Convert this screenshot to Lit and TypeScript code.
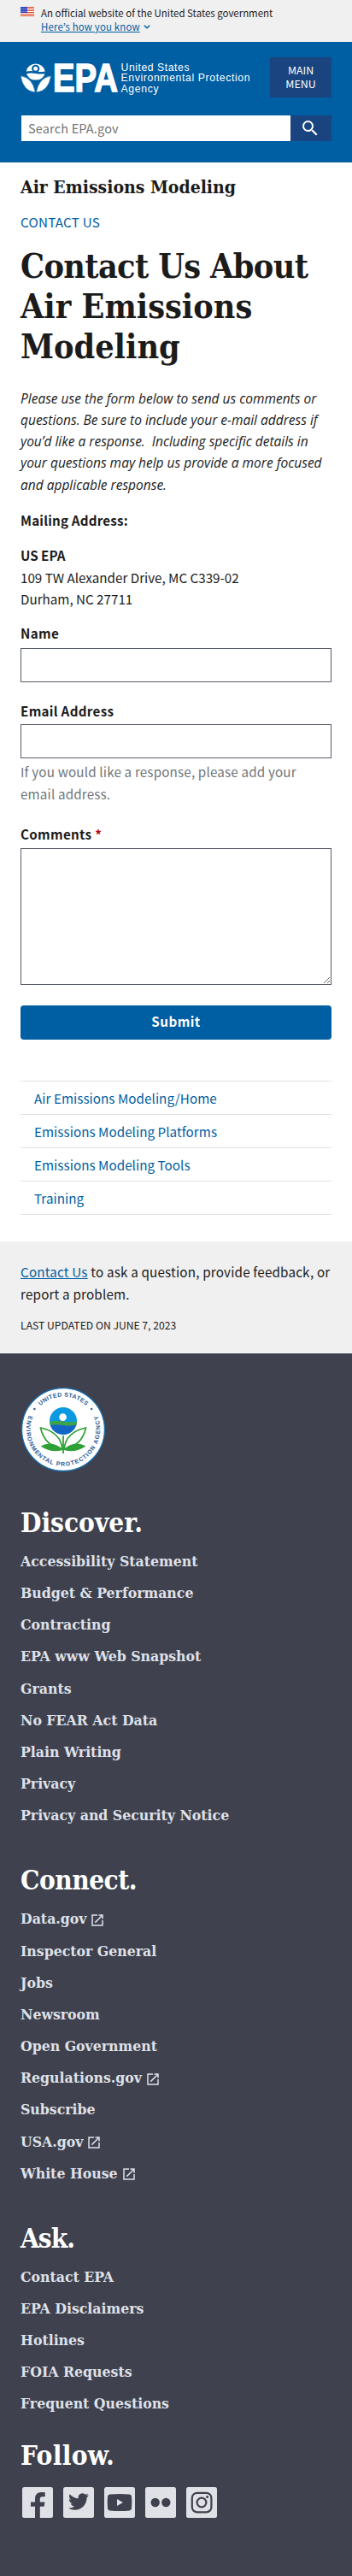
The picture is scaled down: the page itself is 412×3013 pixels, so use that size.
import { LitElement, html, css, svg } from "lit";
import { customElement } from "lit/decorators.js";

interface FooterLink {
  label: string;
  external?: boolean;
}

interface FooterGroup {
  title: string;
  name: string;
  links: FooterLink[];
}

const SECTIONS = [
  "Air Emissions Modeling/Home",
  "Emissions Modeling Platforms",
  "Emissions Modeling Tools",
  "Training",
];

const GROUPS: FooterGroup[] = [
  {
    title: "Discover.",
    name: "discover",
    links: [
      { label: "Accessibility Statement" },
      { label: "Budget & Performance" },
      { label: "Contracting" },
      { label: "EPA www Web Snapshot" },
      { label: "Grants" },
      { label: "No FEAR Act Data" },
      { label: "Plain Writing" },
      { label: "Privacy" },
      { label: "Privacy and Security Notice" },
    ],
  },
  {
    title: "Connect.",
    name: "connect",
    links: [
      { label: "Data.gov", external: true },
      { label: "Inspector General" },
      { label: "Jobs" },
      { label: "Newsroom" },
      { label: "Open Government" },
      { label: "Regulations.gov", external: true },
      { label: "Subscribe" },
      { label: "USA.gov", external: true },
      { label: "White House", external: true },
    ],
  },
  {
    title: "Ask.",
    name: "ask",
    links: [
      { label: "Contact EPA" },
      { label: "EPA Disclaimers" },
      { label: "Hotlines" },
      { label: "FOIA Requests" },
      { label: "Frequent Questions" },
    ],
  },
];

@customElement("epa-header")
class EpaHeader extends LitElement {
  static styles = css`
    :host { display: block; }
    .banner {
      display: flex;
      box-sizing: border-box;
      height: 49px;
      padding: 7px 24px 0;
      gap: 8px;
      background: #f0f0f0;
      color: #1b1b1b;
      font-size: 11.45px;
      line-height: 16px;
    }
    .flag { display: block; margin-top: 1px; }
    .know { display: flex; align-items: center; gap: 3px; color: #005ea2; }
    .know a { text-decoration: underline; letter-spacing: 0.15px; }
    .banner p { margin: 0; white-space: nowrap; }
    .head { height: 141px; box-sizing: border-box; background: #005ea2; padding: 18px 24px 0; }
    .row { display: flex; justify-content: space-between; align-items: center; height: 47px; }
    .logo { display: block; overflow: visible; }
    .menu {
      font: inherit;
      font-size: 12.4px;
      line-height: 16px;
      width: 72px;
      height: 47px;
      padding: 0 0 1px;
      border: 0;
      background: #1a4480;
      color: #fff;
    }
    .search { display: flex; margin-top: 21px; height: 30px; }
    .search input {
      flex: 1;
      min-width: 0;
      box-sizing: border-box;
      border: 0;
      margin-left: 1px;
      padding: 0 8px;
      border-radius: 0;
      font: inherit;
      font-size: 14.5px;
      letter-spacing: 0.16px;
      background: #fff;
    }
    .search input::placeholder { color: #757575; opacity: 1; }
    .go {
      display: flex;
      align-items: center;
      justify-content: center;
      width: 48px;
      padding: 0 2px 0 0;
      border: 0;
      background: #1a4480;
    }
  `;

  render() {
    return html`
      <div class="banner">
        <svg class="flag" width="16" height="11" viewBox="0 0 16 11">
          <rect width="16" height="11" fill="#fff" />
          ${[0, 2, 4, 6, 8, 10].map((y) => svg`<rect y=${y} width="16" height="1" fill="#db3e1f" />`)}
          <rect width="8" height="7" fill="#1e33b1" />
          ${[1, 3, 5].map((y) => [1, 3, 5, 7].map((x) => svg`<rect x=${x - 0.4} y=${y - 0.1} width="0.9" height="0.9" fill="#fff" />`))}
        </svg>
        <div>
          <p>An official website of the United States government</p>
          <p class="know">
            <a>Here’s how you know</a>
            <svg width="10" height="8" viewBox="0 0 10 8"><path d="M1.8 2.8 L5 5.8 L8.2 2.8" fill="none" stroke="#005ea2" stroke-width="1.5" /></svg>
          </p>
        </div>
      </div>
      <div class="head">
        <div class="row">
          <svg class="logo" width="270" height="38" viewBox="24 72 270 38" fill="#fff">
            <path d="M30.6 83.6 A11.3 11.3 0 0 1 52.8 83.6 Q47 84.6 41.7 83.6 Q36 82.6 30.6 83.6 Z" />
            <circle cx="41.7" cy="80.3" r="4.6" fill="#005ea2" />
            <circle cx="41.7" cy="80.3" r="2.5" />
            <path d="M31 86.2 Q36 84.8 41.7 86 Q47.5 87 52.6 86.2 A11.3 11.3 0 0 1 41.7 93.6 A11.3 11.3 0 0 1 31 86.2 Z" />
            <path d="M24 88.6 Q38.5 91 41.3 108 Q27 107 24 88.6 Z" stroke="#005ea2" stroke-width="0.7" />
            <path d="M59.8 88.6 Q45.3 91 42.3 108 Q56.8 107 59.8 88.6 Z" stroke="#005ea2" stroke-width="0.7" />
            <text x="62" y="106.700" font-family="Liberation Sans, sans-serif" font-weight="bold" font-size="47" textLength="76" lengthAdjust="spacingAndGlyphs" stroke="#fff" stroke-width="1.600">EPA</text>
            <g font-family="Liberation Sans, sans-serif" font-size="12.2">
              <text x="141.5" y="82.5" textLength="80">United States</text>
              <text x="141.5" y="95" textLength="151">Environmental Protection</text>
              <text x="141.5" y="107.7" textLength="44">Agency</text>
            </g>
          </svg>
          <button class="menu">MAIN<br />MENU</button>
        </div>
        <div class="search">
          <input type="search" placeholder="Search EPA.gov" />
          <button class="go" aria-label="Search">
            <svg width="24" height="24" viewBox="0 0 24 24" fill="#fff">
              <path d="M15.5 14h-.79l-.28-.27A6.471 6.471 0 0 0 16 9.5 6.5 6.5 0 1 0 9.5 16c1.61 0 3.09-.59 4.23-1.57l.27.28v.79l5 4.99L20.49 19l-4.99-5zm-6 0C7.01 14 5 11.99 5 9.5S7.01 5 9.5 5 14 7.01 14 9.5 11.99 14 9.5 14z" />
            </svg>
          </button>
        </div>
      </div>
    `;
  }
}

@customElement("epa-footer")
class EpaFooter extends LitElement {
  static styles = css`
    :host { display: block; background: #3f424e; padding: 39px 24px 0; height: 1391px; box-sizing: content-box; }
    .seal { display: block; margin-bottom: 39px; }
    section { margin-bottom: 37px; }
    section.ask { margin-bottom: 21px; }
    h2, ul { margin: 0; padding: 0; font-family: "DejaVu Serif Condensed", "DejaVu Serif", serif; font-stretch: 75%; font-weight: bold; }
    h2 { font-size: 31.3px; line-height: 40px; color: #fff; }
    .connect h2 { letter-spacing: -0.5px; }
    .ask h2 { letter-spacing: -1px; }
    .follow { letter-spacing: 0.3px; }
    ul { list-style: none; margin-top: 7px; font-size: 17.5px; line-height: 37.17px; color: #dfe1e9; }
    li { display: flex; align-items: center; gap: 4px; height: 37.17px; }
    .ext { margin-top: 2px; }
    .social { display: flex; gap: 12px; margin: 17px 0 0 2px; }
    .social svg { display: block; }
  `;

  private tile(content: unknown) {
    return html`<svg width="36" height="36" viewBox="0 0 36 36"><rect width="36" height="36" rx="2.5" fill="#dfe1e6" />${content}</svg>`;
  }

  render() {
    const dark = "#3f424e";
    return html`
      <svg class="seal" width="100" height="100" viewBox="0 0 100 100">
        <circle cx="50" cy="50" r="48.4" fill="#fff" stroke="#1672b4" stroke-width="1.2" />
        <defs>
          <path id="top" d="M11.5 50 A38.5 38.5 0 0 1 88.5 50" />
          <path id="low" d="M25 14.3 A43.2 43.2 0 1 0 75 14.3" />
        </defs>
        <g font-family="Liberation Sans, sans-serif" font-weight="bold" font-size="7" fill="#2a5b94">
          <text text-anchor="middle"><textPath href="#top" startOffset="50%" textLength="59">UNITED STATES</textPath></text>
          <text text-anchor="middle"><textPath href="#low" startOffset="50%" textLength="168">ENVIRONMENTAL PROTECTION AGENCY</textPath></text>
        </g>
        <circle cx="16.4" cy="26" r="1.2" fill="#2a5b94" />
        <circle cx="83.2" cy="26" r="1.2" fill="#2a5b94" />
        <circle cx="50" cy="40" r="16" fill="#0b9ae0" />
        <path d="M34 41 Q42 39 50 40.5 Q58 42 66 40.5 A16 16 0 0 1 65 46 H35 Z" fill="#3fa34a" />
        <path d="M34.8 45 Q42 43.5 50 45 Q58 46.5 65.4 44.5 A16 16 0 0 1 34.8 45 Z" fill="#1466c4" />
        <circle cx="49.6" cy="35.6" r="4.3" fill="#fff" />
        <g fill="#fff" stroke="#2fa036" stroke-width="1.7">
          <path d="M49 73 Q47 53 23.5 48 Q28 69 49 73 Z" />
          <path d="M51 73 Q53 53 76.5 48 Q72 69 51 73 Z" />
        </g>
        <path d="M49.3 74 Q36 78 23.5 69.5 Q37 62 49.3 73 Z M50.7 74 Q64 78 76.5 69.5 Q63 62 50.7 73 Z" fill="#2fa036" />
        <rect x="49.1" y="57" width="1.8" height="21" fill="#2fa036" />
      </svg>
      ${GROUPS.map(
        (g) => html`
          <section class=${g.name}>
            <h2>${g.title}</h2>
            <ul>
              ${g.links.map(
                (l) => html`<li>
                  <span>${l.label}</span>
                  ${l.external
                    ? html`<svg class="ext" width="18" height="18" viewBox="0 0 24 24" fill="#dfe1e9"><path d="M19 19H5V5h7V3H3v18h18v-9h-2v7zM14 3v2h3.59l-9.83 9.83 1.41 1.41L19 6.41V10h2V3h-7z" /></svg>`
                    : ""}
                </li>`
              )}
            </ul>
          </section>
        `
      )}
      <h2 class="follow">Follow.</h2>
      <div class="social">
        ${this.tile(svg`<path d="M15 36 V22.8 H10 V17.6 H15 V13.8 C15 8.7 18 6 22.6 6 C24.5 6 26.2 6.2 26.7 6.3 V11.2 H23.8 C21.3 11.2 20.8 12.4 20.8 14.2 V17.6 H26.4 L25.7 22.8 H20.8 V36 Z" fill=${dark} />`)}
        ${this.tile(svg`<path transform="translate(6 5)" d="M23.95 4.57a10 10 0 0 1-2.82.77 4.96 4.96 0 0 0 2.16-2.72c-.95.55-2 .95-3.13 1.18a4.92 4.92 0 0 0-8.38 4.48C7.69 8.1 4.07 6.13 1.64 3.16a4.82 4.82 0 0 0-.67 2.48c0 1.71.87 3.21 2.19 4.1a4.9 4.9 0 0 1-2.23-.62v.06a4.92 4.92 0 0 0 3.95 4.83 5 5 0 0 1-2.21.08 4.94 4.94 0 0 0 4.6 3.42A9.87 9.87 0 0 1 0 19.54a14 14 0 0 0 7.55 2.21c9.05 0 14-7.5 14-13.98 0-.21 0-.42-.02-.63a9.94 9.94 0 0 0 2.46-2.55z" fill=${dark} />`)}
        ${this.tile(svg`<path d="M6.5 8.6 Q18 7.4 29.5 8.6 Q31.7 8.9 32 11 Q32.7 18 32 25 Q31.7 27.2 29.5 27.5 Q18 28.6 6.5 27.5 Q4.3 27.2 4 25 Q3.300 18 4 11 Q4.3 8.9 6.5 8.6 Z" fill=${dark} /><path d="M15 14 L22 18 L15 22 Z" fill="#dfe1e6" />`)}
        ${this.tile(svg`<circle cx="11.7" cy="18" r="5.2" fill=${dark} /><circle cx="24.3" cy="18" r="5.2" fill=${dark} />`)}
        ${this.tile(svg`<rect x="6.8" y="6.8" width="22.6" height="22.6" rx="6" fill="none" stroke=${dark} stroke-width="2.2" /><circle cx="18" cy="18" r="5.4" fill="none" stroke=${dark} stroke-width="2.2" /><circle cx="24.6" cy="11.4" r="1.5" fill=${dark} />`)}
      </div>
    `;
  }
}

@customElement("app-root")
class AppRoot extends LitElement {
  static styles = css`
    :host {
      display: block;
      background: #fff;
      color: #1b1b1b;
      font-family: "Noto Sans CJK JP", "Noto Sans", sans-serif;
      font-size: 15.2px;
      line-height: 25.4px;
      overflow: hidden;
    }
    main { box-sizing: border-box; height: 1262px; padding: 16.4px 24px 0; }
    h1, .site { margin: 0; font-family: "DejaVu Serif Condensed", "DejaVu Serif", serif; font-stretch: 75%; font-weight: bold; }
    .site { font-size: 21px; line-height: 26px; }
    .crumb { margin: 14.2px 0 16px; line-height: 25px; letter-spacing: 0.23px; color: #005ea2; }
    h1 { font-size: 39.2px; line-height: 47px; white-space: nowrap; }
    h1 .tight { letter-spacing: -0.65px; }
    p { margin: 0; }
    .intro { margin-top: 25px; font-family: "Open Sans", sans-serif; font-style: italic; font-size: 15.5px; line-height: 25.3px; white-space: nowrap; }
    .strong { margin: 16px 0 15.8px; font-weight: bold; letter-spacing: 0.2px; }
    .org { font-weight: bold; }
    label { display: block; font-weight: bold; margin: 15px 0 4px; letter-spacing: 0.3px; }
    .second { margin: 21px 0 3px; }
    .third { margin: 22px 0 3.4px; }
    .req { color: #b50909; }
    .box { display: block; box-sizing: border-box; width: 100%; height: 40px; margin: 0; border: 1px solid #565c65; border-radius: 0; background: #fff; }
    .area { height: 160px; }
    .hint { margin-top: 3px; line-height: 25.2px; color: #71767a; letter-spacing: 0.17px; white-space: nowrap; }
    .submit { display: block; width: 100%; height: 40px; margin-top: 24px; padding: 0 0 2px; border: 0; border-radius: 4px; background: #005ea2; color: #fff; font: inherit; font-weight: bold; letter-spacing: 0.48px; }
    .nav { list-style: none; margin: 48px 0 0; padding: 0; border-top: 1px solid #dfe1e2; }
    .nav li { height: 38px; line-height: 38px; padding-left: 16px; border-bottom: 1px solid #dfe1e2; color: #005ea2; letter-spacing: 0.05px; }
    .info { box-sizing: border-box; height: 131px; padding: 23.2px 24px 0; background: #f0f0f0; }
    .ask { letter-spacing: 0.19px; white-space: nowrap; }
    .ask a { color: #005ea2; text-decoration: underline; }
    .date { margin-top: 14.4px; font-size: 12.17px; line-height: 20px; }
  `;

  render() {
    return html`
      <epa-header></epa-header>
      <main>
        <div class="site">Air Emissions Modeling</div>
        <p class="crumb">CONTACT US</p>
        <h1><span class="tight">Contact Us About</span><br />Air Emissions<br />Modeling</h1>
        <p class="intro">
          Please use the form below to send us comments or<br />questions. Be sure to include your e-mail address if<br />you’d like a
          response.&nbsp; Including specific details in<br />your questions may help us provide a more focused<br />and applicable response.
        </p>
        <p class="strong">Mailing Address:</p>
        <p><span class="org">US EPA</span><br />109 TW Alexander Drive, MC C339-02<br />Durham, NC 27711</p>
        <label for="name">Name</label>
        <input id="name" class="box" />
        <label for="email" class="second">Email Address</label>
        <input id="email" class="box" />
        <p class="hint">If you would like a response, please add your<br />email address.</p>
        <label for="comments" class="third">Comments <span class="req">*</span></label>
        <textarea id="comments" class="box area"></textarea>
        <button class="submit">Submit</button>
        <ul class="nav">
          ${SECTIONS.map((s) => html`<li>${s}</li>`)}
        </ul>
      </main>
      <div class="info">
        <p class="ask"><a>Contact Us</a> to ask a question, provide feedback, or<br />report a problem.</p>
        <p class="date">LAST UPDATED ON JUNE 7, 2023</p>
      </div>
      <epa-footer></epa-footer>
    `;
  }
}
